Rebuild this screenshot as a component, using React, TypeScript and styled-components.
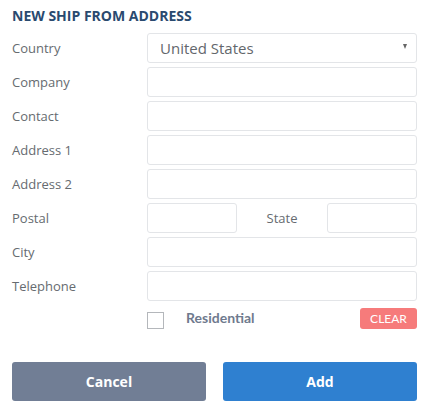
import styled, { createGlobalStyle } from 'styled-components';

const GlobalStyle = createGlobalStyle`
  body {
    margin: 0;
    background: #fff;
    font-family: 'Open Sans', sans-serif;
  }
`;

const Form = styled.div`
  width: 429px;
  padding: 6px 12px 0 12px;
  box-sizing: border-box;
`;

const Heading = styled.h2`
  margin: 0 0 7px 0;
  font-size: 14px;
  font-weight: 700;
  color: #2a4a6f;
  line-height: 20px;
`;

const Row = styled.div`
  display: grid;
  grid-template-columns: 135px 1fr;
  align-items: center;
  margin-bottom: 4px;
`;

const Label = styled.label`
  font-size: 13px;
  color: #666b70;
`;

const Field = styled.input`
  height: 30px;
  box-sizing: border-box;
  border: 1px solid #e3e5e8;
  border-radius: 3px;
  padding: 0 12px;
  font-family: 'Open Sans', sans-serif;
  font-size: 15px;
  color: #555;
  outline: none;
  width: 100%;
`;

const SelectBox = styled.div`
  height: 30px;
  box-sizing: border-box;
  border: 1px solid #e3e5e8;
  border-radius: 3px;
  padding: 0 9px 0 12px;
  display: flex;
  align-items: center;
  justify-content: space-between;
  font-size: 15px;
  color: #63676c;
`;

const Caret = styled.span`
  width: 0;
  height: 0;
  border-left: 2.5px solid transparent;
  border-right: 2.5px solid transparent;
  border-top: 5px solid #666;
  margin-top: -4px;
`;

const Split = styled.div`
  display: grid;
  grid-template-columns: 90px 1fr 90px;
  align-items: center;
`;

const SplitLabel = styled(Label)`
  text-align: center;
`;

const CheckRow = styled.div`
  display: flex;
  align-items: center;
  margin: 6px 0 0 135px;
  height: 24px;
`;

const Box = styled.span`
  width: 17px;
  height: 17px;
  border: 1px solid #b4b7bb;
  box-sizing: border-box;
  display: inline-block;
  margin-top: 2px;
`;

const CheckLabel = styled.span`
  font-family: Lato, sans-serif;
  font-weight: 700;
  font-size: 14px;
  color: #6f7a8e;
  margin-left: 22px;
  margin-bottom: 4px;
  flex: 1;
`;

const ClearButton = styled.button`
  background: #f67b7b;
  color: #fff;
  border: 0;
  border-radius: 3px;
  height: 21px;
  width: 57px;
  font-family: Lato, sans-serif;
  font-size: 12px;
  padding: 0;
  margin-bottom: 2px;
`;

const Actions = styled.div`
  display: grid;
  grid-template-columns: 1fr 1fr;
  gap: 17px;
  margin-top: 31px;
`;

const ActionButton = styled.button<{ primary?: boolean }>`
  height: 39px;
  border: 0;
  border-radius: 3px;
  background: ${(p) => (p.primary ? '#2f80d0' : '#717e95')};
  color: #fff;
  font-family: 'Open Sans', sans-serif;
  font-weight: 700;
  font-size: 14px;
`;

const fields = ['Company', 'Contact', 'Address 1', 'Address 2'];

export default function App() {
  return (
    <Form>
      <GlobalStyle />
      <Heading>NEW SHIP FROM ADDRESS</Heading>
      <Row>
        <Label>Country</Label>
        <SelectBox>
          United States
          <Caret />
        </SelectBox>
      </Row>
      {fields.map((f) => (
        <Row key={f}>
          <Label>{f}</Label>
          <Field />
        </Row>
      ))}
      <Row>
        <Label>Postal</Label>
        <Split>
          <Field />
          <SplitLabel>State</SplitLabel>
          <Field />
        </Split>
      </Row>
      <Row>
        <Label>City</Label>
        <Field />
      </Row>
      <Row>
        <Label>Telephone</Label>
        <Field />
      </Row>
      <CheckRow>
        <Box />
        <CheckLabel>Residential</CheckLabel>
        <ClearButton>CLEAR</ClearButton>
      </CheckRow>
      <Actions>
        <ActionButton>Cancel</ActionButton>
        <ActionButton primary>Add</ActionButton>
      </Actions>
    </Form>
  );
}
